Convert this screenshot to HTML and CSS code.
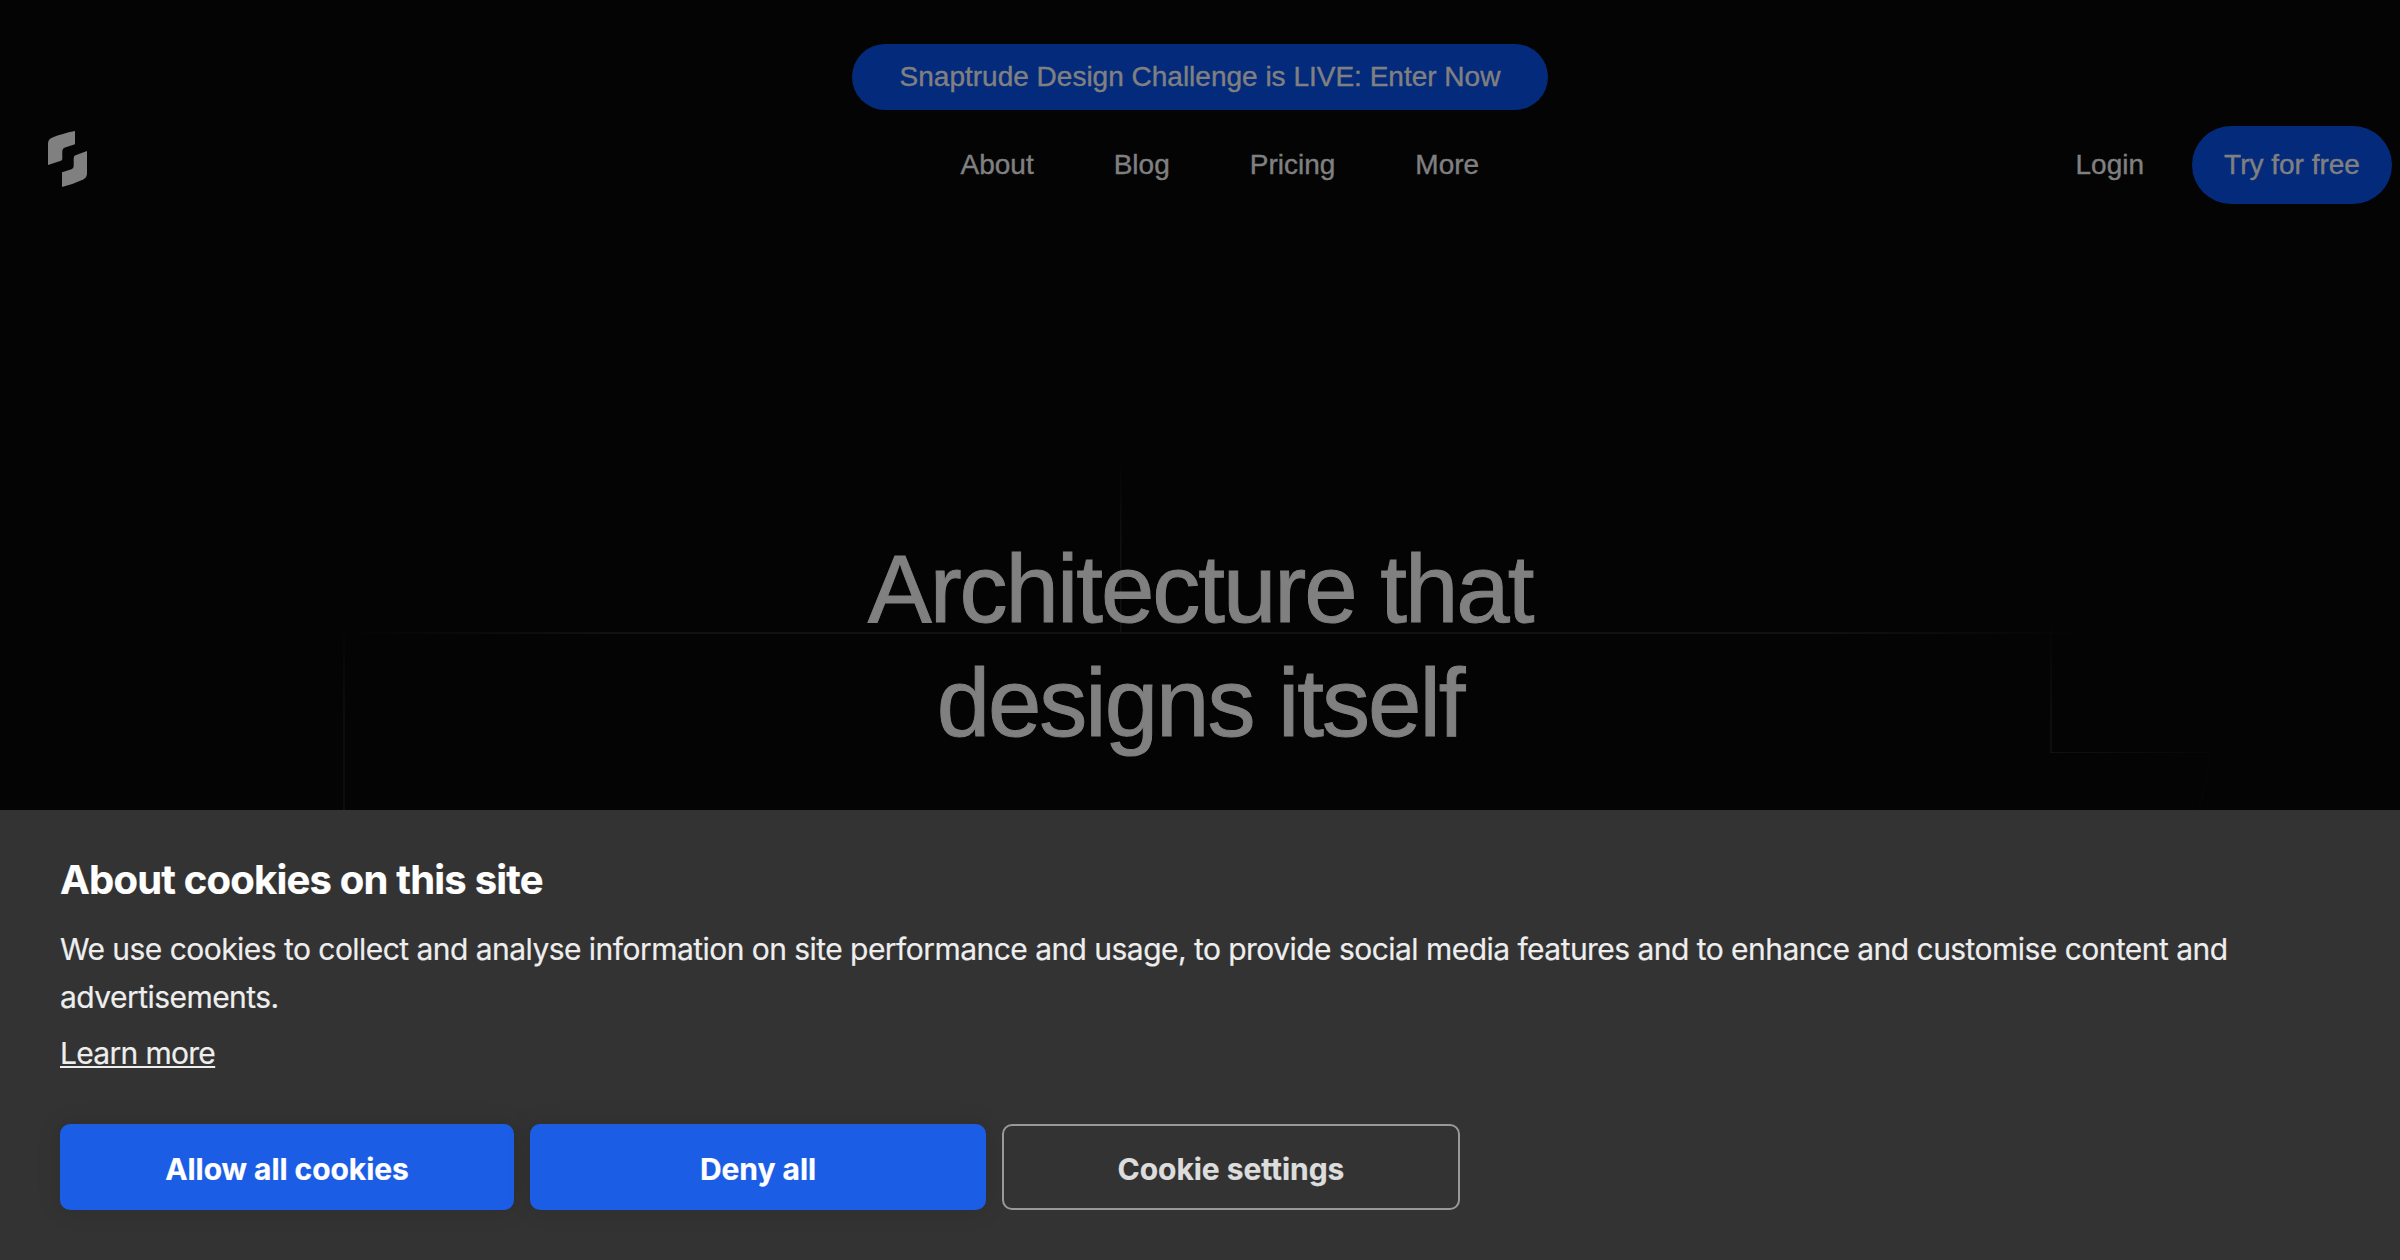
FILE: index.html
```html
<!DOCTYPE html>
<html lang="en">
<head>
    <meta charset="UTF-8">
    <meta name="viewport" content="width=device-width, initial-scale=1.0">
    <title>Snaptrude</title>
    <link rel="stylesheet" href="styles.css">
</head>
<body>
    <!-- Floor plan lines behind the hero -->
    <svg class="plan-lines" viewBox="0 0 2400 810" fill="none">
        <defs>
            <linearGradient id="fadeWide" gradientUnits="userSpaceOnUse" x1="340" y1="0" x2="2090" y2="0">
                <stop offset="0" stop-color="#fff" stop-opacity="0"/>
                <stop offset="0.15" stop-color="#fff" stop-opacity="0.05"/>
                <stop offset="0.85" stop-color="#fff" stop-opacity="0.05"/>
                <stop offset="1" stop-color="#fff" stop-opacity="0"/>
            </linearGradient>
            <linearGradient id="fadeTop" gradientUnits="userSpaceOnUse" x1="0" y1="455" x2="0" y2="545">
                <stop offset="0" stop-color="#fff" stop-opacity="0"/>
                <stop offset="1" stop-color="#fff" stop-opacity="0.05"/>
            </linearGradient>
            <linearGradient id="fadeSide" gradientUnits="userSpaceOnUse" x1="0" y1="618" x2="0" y2="720">
                <stop offset="0" stop-color="#fff" stop-opacity="0"/>
                <stop offset="1" stop-color="#fff" stop-opacity="0.04"/>
            </linearGradient>
            <linearGradient id="fadeRight" gradientUnits="userSpaceOnUse" x1="2050" y1="0" x2="2215" y2="0">
                <stop offset="0" stop-color="#fff" stop-opacity="0.055"/>
                <stop offset="1" stop-color="#fff" stop-opacity="0.01"/>
            </linearGradient>
        </defs>
        <rect x="340" y="632" width="1750" height="2" fill="url(#fadeWide)"/>
        <rect x="1120" y="455" width="1.5" height="177" fill="url(#fadeTop)"/>
        <rect x="343" y="618" width="2" height="192" fill="url(#fadeSide)"/>
        <rect x="2050" y="618" width="2" height="134" fill="url(#fadeSide)"/>
        <rect x="2050" y="752" width="160" height="1" fill="url(#fadeRight)"/>
        <path d="M2209 753Q2208 783 2198 810" stroke="#fff" stroke-opacity="0.012" stroke-width="2"/>
    </svg>

    <div class="page">
        <a class="announcement" href="#">Snaptrude Design Challenge is LIVE: Enter Now</a>

        <header class="navbar">
            <a class="logo" href="#">
                <svg width="40" height="56" viewBox="0 0 40 56" fill="#808080">
                    <path d="M0 34V12.500Q0 8 4.500 6.400Q14 2.600 27 0V13.300L17 16.600Q14.300 17.500 14.300 20V28Q14.300 29.300 13 29.800Z"/>
                    <path d="M39 20V42.500Q39 46.500 35.300 48.400Q25.500 53 14 56V41.300L23.500 38.200Q25.700 37.400 25.700 35V27Q25.700 25 27.500 24.300Z"/>
                </svg>
            </a>
            <nav class="nav-links">
                <a href="#">About</a>
                <a href="#">Blog</a>
                <a href="#">Pricing</a>
                <a href="#">More</a>
            </nav>
            <div class="nav-actions">
                <a href="#">Login</a>
                <a class="btn-try" href="#">Try for free</a>
            </div>
        </header>

        <h1 class="hero-title">Architecture that<br>designs itself</h1>
    </div>

    <!-- Cookie consent -->
    <div class="cookie-banner">
        <h2>About cookies on this site</h2>
        <p>We use cookies to collect and analyse information on site performance and usage, to provide social media features and to enhance and customise content and advertisements.</p>
        <a class="learn-more" href="#">Learn more</a>
        <div class="cookie-buttons">
            <button class="btn">Allow all cookies</button>
            <button class="btn">Deny all</button>
            <button class="btn btn-outline">Cookie settings</button>
        </div>
    </div>
</body>
</html>
```

FILE: styles.css
```css
* {
    box-sizing: border-box;
}
body {
    margin: 0;
    height: 1260px;
    overflow: hidden;
    background-color: #040404;
    color: #808080;
    font-family: "Liberation Sans", Arial, sans-serif;
    font-size: 28px;
    -webkit-text-stroke: 0.4px;
}
a {
    color: inherit;
    text-decoration: none;
}
.plan-lines {
    position: absolute;
    top: 0;
    left: 0;
    width: 2400px;
    height: 810px;
}
.page {
    position: relative;
    display: flex;
    flex-direction: column;
    align-items: center;
    padding-top: 44px;
}
.announcement {
    height: 66px;
    padding: 0 48px;
    line-height: 66px;
    border-radius: 33px;
    background-color: #042a7c;
}
.navbar {
    display: grid;
    grid-template-columns: 960.5px auto 1fr;
    align-items: center;
    width: 100%;
    height: 78px;
    margin-top: 16px;
    padding-right: 8px;
}
.logo {
    display: flex;
    padding: 0 0 12px 48px;
}
.nav-links {
    display: flex;
    gap: 80px;
}
.nav-actions {
    display: flex;
    align-items: center;
    justify-content: flex-end;
    gap: 48px;
}
.btn-try {
    width: 200px;
    height: 78px;
    line-height: 78px;
    text-align: center;
    border-radius: 39px;
    background-color: #042a7c;
}
.hero-title {
    margin: 328px 0 0;
    font-size: 96px;
    font-weight: 400;
    line-height: 114px;
    letter-spacing: -0.021em;
    text-align: center;
    -webkit-text-stroke: 1px;
}
.cookie-banner {
    position: fixed;
    left: 0;
    right: 0;
    bottom: 0;
    height: 450px;
    padding: 46px 60px 0;
    background-color: #333;
    color: #eee;
    font-family: Inter, sans-serif;
    font-size: 30px;
    line-height: 48px;
    -webkit-text-stroke: 0.2px;
}
.cookie-banner h2 {
    margin: 0 0 21px;
    font-size: 40px;
    font-weight: 700;
    line-height: 48px;
    letter-spacing: -0.02em;
    color: #fff;
}
.cookie-banner p {
    margin: 0 0 8px;
    letter-spacing: -0.018em;
}
.learn-more {
    display: block;
    width: fit-content;
    letter-spacing: -0.023em;
    text-decoration: underline;
    text-decoration-thickness: 2px;
    text-underline-offset: 2px;
    text-decoration-skip-ink: none;
}
.cookie-buttons {
    display: flex;
    gap: 16px;
    margin-top: 47px;
}
.btn {
    width: 456px;
    height: 86px;
    padding: 4px 0 0;
    border: none;
    border-radius: 10px;
    background-color: #1b5de4;
    box-shadow: 0 0 24px rgba(0, 0, 0, 0.12);
    color: #fff;
    font-family: inherit;
    font-size: 30px;
    font-weight: 700;
    letter-spacing: -0.002em;
    cursor: pointer;
}
.btn:first-child {
    width: 454px;
}
.btn-outline {
    width: 458px;
    border: 2px solid #999;
    background-color: transparent;
    box-shadow: none;
    color: #ddd;
}
```
